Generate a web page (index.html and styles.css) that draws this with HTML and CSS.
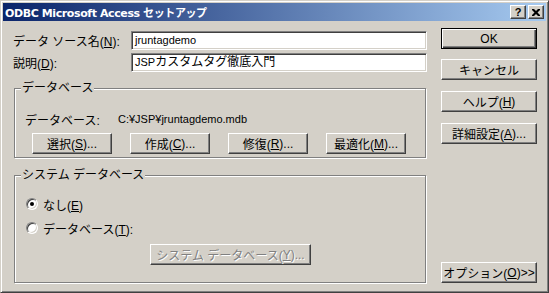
FILE: index.html
```html
<!DOCTYPE html>
<html lang="ja">
<head>
    <meta charset="UTF-8">
    <title>ODBC Microsoft Access セットアップ</title>
    <link rel="stylesheet" href="styles.css">
</head>
<body>
<div class="window">
    <div class="titlebar">
        <span class="title">ODBC Microsoft Access セットアップ</span>
        <span class="capbtn help">?</span>
        <span class="capbtn close">
            <svg width="8" height="7" viewBox="0 0 8 7"><path d="M0 0h2l2 2 2-2h2v1l-2.5 2.5 2.5 2.5v1h-2l-2-2-2 2h-2v-1l2.5-2.5-2.5-2.5z" fill="#000"/></svg>
        </span>
    </div>
    <div class="content">
        <div class="main">
            <div class="row first">
                <label class="label">データ ソース名(<u>N</u>):</label>
                <div class="edit"><span class="en">jruntagdemo</span></div>
            </div>
            <div class="row">
                <label class="label">説明(<u>D</u>):</label>
                <div class="edit"><span class="en">JSP</span>カスタムタグ徹底入門</div>
            </div>

            <!-- データベース -->
            <div class="group dbgroup">
                <span class="legend">データベース</span>
                <div class="dbpath">
                    <span class="dblabel">データベース:</span>
                    <span class="en">C:¥JSP¥jruntagdemo.mdb</span>
                </div>
                <div class="dbbuttons">
                    <span class="btn">選択(<u>S</u>)...</span>
                    <span class="btn">作成(<u>C</u>)...</span>
                    <span class="btn">修復(<u>R</u>)...</span>
                    <span class="btn">最適化(<u>M</u>)...</span>
                </div>
            </div>

            <!-- システム データベース -->
            <div class="group sysgroup">
                <span class="legend">システム データベース</span>
                <div class="radio-row">
                    <span class="radio checked"></span>
                    <span>なし(<u>E</u>)</span>
                </div>
                <div class="radio-row">
                    <span class="radio"></span>
                    <span>データベース(<u>T</u>):</span>
                </div>
                <span class="btn disabled sysbtn">システム データベース(<u>Y</u>)...</span>
            </div>
        </div>
        <div class="side">
            <span class="btn default">OK</span>
            <span class="btn">キャンセル</span>
            <span class="btn">ヘルプ(<u>H</u>)</span>
            <span class="btn">詳細設定(<u>A</u>)...</span>
            <span class="btn options">オプション(<u>O</u>)&gt;&gt;</span>
        </div>
    </div>
</div>
</body>
</html>
```
FILE: styles.css
```css
body{
    margin: 0;
    font-family: "Liberation Sans", "Noto Sans CJK JP", sans-serif;
    font-size: 12px;
    color: #000;
}
.en{
    font-size: 11px;
}
.window{
    width: 549px;
    height: 293px;
    box-sizing: border-box;
    border: 1px solid;
    border-color: #d4d0c8 #404040 #404040 #d4d0c8;
    box-shadow: inset 1px 1px #fff, inset -1px -1px #808080;
    padding: 2px;
    background-color: #d4d0c8;
    display: flex;
    flex-direction: column;
}
.titlebar{
    height: 18px;
    flex: none;
    display: flex;
    align-items: center;
    padding: 0 2px;
    background: linear-gradient(to right, #0a246a, #a6caf0);
}
.title{
    flex: 1;
    color: white;
    font-weight: bold;
    font-size: 11px;
    font-family: "DejaVu Sans", "Noto Sans CJK JP", sans-serif;
    letter-spacing: -0.4px;
    white-space: nowrap;
}
.capbtn{
    width: 16px;
    height: 14px;
    box-sizing: border-box;
    border: 1px solid;
    border-color: #fff #404040 #404040 #fff;
    box-shadow: inset -1px -1px #808080, inset 1px 1px #d4d0c8;
    background-color: #d4d0c8;
    display: flex;
    align-items: center;
    justify-content: center;
}
.help{
    margin-right: 2px;
    font-family: "Liberation Sans", sans-serif;
    font-weight: bold;
    font-size: 11px;
    line-height: 12px;
}
.content{
    flex: 1;
    display: flex;
    padding: 7px 9px 7px 10px;
}
.main{
    width: 414px;
    padding-top: 3px;
}
.row{
    display: flex;
    align-items: center;
    margin-top: 3px;
}
.row.first{
    margin-top: 0;
}
.label{
    width: 118px;
}
.edit{
    width: 296px;
    height: 19px;
    box-sizing: border-box;
    border: 1px solid;
    border-color: #808080 #fff #fff #808080;
    box-shadow: inset 1px 1px #404040, inset -1px -1px #d4d0c8;
    background-color: white;
    padding-left: 3px;
    line-height: 17px;
    white-space: nowrap;
}
.group{
    position: relative;
    margin-left: 1px;
    width: 412px;
    box-sizing: border-box;
    border: 1px solid #808080;
    box-shadow: inset 1px 1px #fff, 1px 1px #fff;
}
.legend{
    position: absolute;
    top: -8px;
    left: 6px;
    padding: 0 1px;
    line-height: 15px;
    background-color: #d4d0c8;
}
.dbgroup{
    margin-top: 16px;
    height: 70px;
    padding: 22px 0 0 10px;
}
.dbpath{
    display: flex;
    height: 16px;
    align-items: center;
}
.dblabel{
    width: 93px;
}
.dbbuttons{
    display: grid;
    grid-template-columns: repeat(4, 80px);
    column-gap: 18px;
    margin: 6px 0 0 7px;
}
.btn{
    height: 21px;
    box-sizing: border-box;
    border: 1px solid;
    border-color: #fff #404040 #404040 #fff;
    box-shadow: inset -1px -1px #808080, inset 1px 1px #d4d0c8;
    display: flex;
    align-items: center;
    justify-content: center;
    white-space: nowrap;
}
.sysgroup{
    margin-top: 17px;
    height: 108px;
    padding: 20px 0 0 11px;
}
.radio-row{
    display: flex;
    align-items: center;
    height: 16px;
    margin-bottom: 8px;
}
.radio{
    width: 12px;
    height: 12px;
    box-sizing: border-box;
    border-radius: 50%;
    border: 1px solid;
    border-color: #808080 #fff #fff #808080;
    box-shadow: inset 1px 1px #404040, inset -1px -1px #d4d0c8;
    background-color: white;
    margin-right: 5px;
    display: flex;
    align-items: center;
    justify-content: center;
}
.radio.checked::after{
    content: "";
    width: 4px;
    height: 4px;
    border-radius: 50%;
    background-color: black;
}
.sysbtn{
    width: 161px;
    margin: 6px 0 0 124px;
    color: #808080;
    text-shadow: 1px 1px #fff;
}
.side{
    margin-left: 14px;
    width: 96px;
    display: flex;
    flex-direction: column;
}
.side .btn{
    margin-bottom: 11px;
}
.side .default{
    border: 1px solid #000;
    box-shadow: inset 1px 1px #fff, inset -1px -1px #404040, inset -2px -2px #808080;
    margin-bottom: 10px;
}
.side .options{
    margin: auto 0 0 0;
}
```
